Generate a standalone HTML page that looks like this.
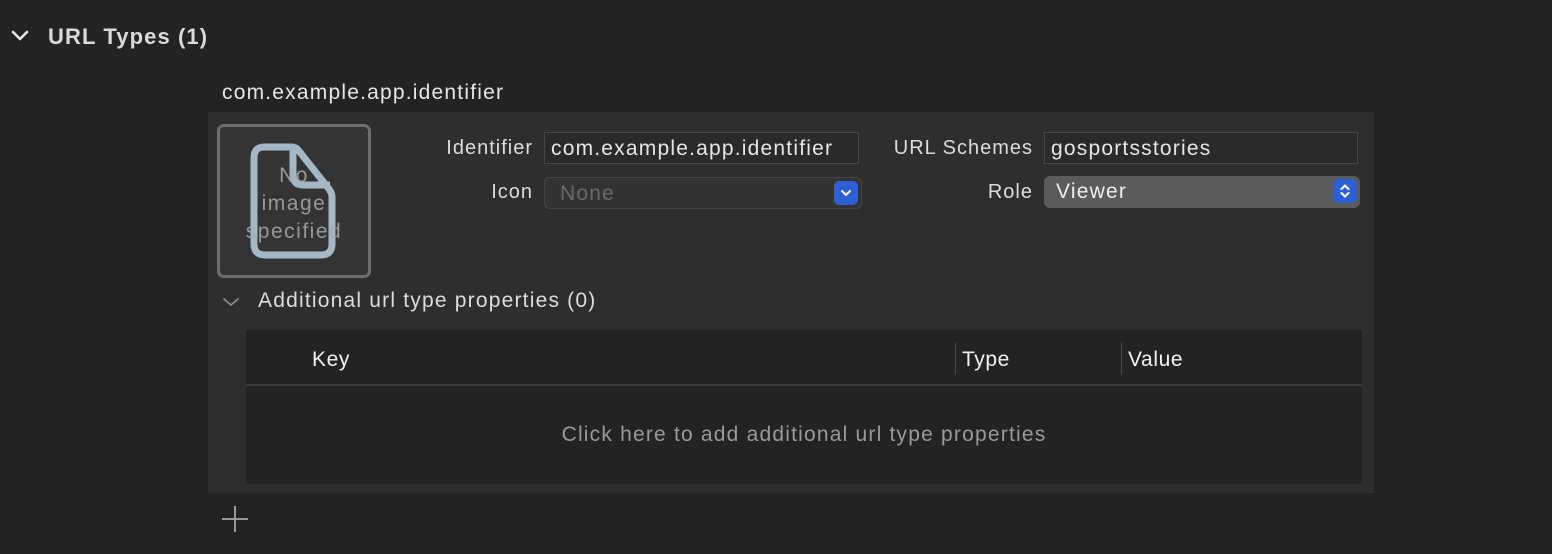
<!DOCTYPE html>
<html><head><meta charset="utf-8"><style>
*{margin:0;padding:0;box-sizing:border-box}
body{width:1552px;height:554px;background:#232323;font-family:"Liberation Sans",sans-serif;color:#e0e0e0;position:relative;overflow:hidden;letter-spacing:1.2px}
.a{position:absolute;white-space:nowrap}
.lbl{font-size:20px;color:#dcdcdc;text-align:right;letter-spacing:1px}
.field{position:absolute;background:#2a2a2a;border:1px solid #474747;font-size:21px;color:#e6e6e6;padding-left:6px;line-height:31px}
.pop{position:absolute;border-radius:6px;font-size:21px;padding-left:15px;line-height:31px}
.btn{position:absolute;top:3px;right:3px;width:24px;height:24px;border-radius:5px;background:#2f5fd4;}
</style></head><body>
<svg class="a" style="left:11px;top:30px" width="18" height="12"><path d="M2 2 L9 9 L16 2" fill="none" stroke="#e6e6e6" stroke-width="2.6" stroke-linecap="round" stroke-linejoin="round"/></svg>
<div class="a" style="left:48px;top:24px;font-size:22px;font-weight:bold;color:#dadada;letter-spacing:1.1px">URL Types (1)</div>
<div class="a" style="left:222px;top:81px;font-size:21px;color:#e6e6e6">com.example.app.identifier</div>

<div class="a" style="left:208px;top:112px;width:1166px;height:381px;background:#2e2e2e"></div>

<div class="a" style="left:217px;top:124px;width:154px;height:154px;border:3px solid #6e6e6e;border-radius:7px;background:#343434"></div>
<svg class="a" style="left:250px;top:143px" width="90" height="118"><path d="M14 4 H42 Q46 4 49 8 L79 46 Q82 50 82 54 V101 Q82 112 71 112 H15 Q4 112 4 101 V15 Q4 4 14 4 Z" fill="none" stroke="#a3b7c7" stroke-width="7"/><path d="M43 7 V32 Q43 42 53 42 H80" fill="none" stroke="#a3b7c7" stroke-width="7"/></svg>
<div class="a" style="left:217px;top:162px;width:154px;text-align:center;font-size:21px;line-height:28px;color:rgba(170,170,170,0.85);white-space:normal;letter-spacing:1.5px">No<br>image<br>specified</div>

<div class="a lbl" style="left:380px;width:153px;top:137px">Identifier</div>
<div class="field" style="left:544px;top:132px;width:315px;height:32px">com.example.app.identifier</div>
<div class="a lbl" style="left:380px;width:153px;top:181px">Icon</div>
<div class="pop" style="left:544px;top:177px;width:318px;height:32px;background:#333;border:1px solid #454545;color:#6a6a6a">None<div class="btn"><svg width="24" height="24"><path d="M8 10 L12 14 L16 10" fill="none" stroke="#fff" stroke-width="2" stroke-linecap="round"/></svg></div></div>

<div class="a lbl" style="left:860px;width:173px;top:137px">URL Schemes</div>
<div class="field" style="left:1044px;top:132px;width:314px;height:32px">gosportsstories</div>
<div class="a lbl" style="left:860px;width:173px;top:181px">Role</div>
<div class="pop" style="left:1044px;top:176px;width:316px;height:32px;background:#5b5b5b;color:#eee;padding-left:12px">Viewer<div class="btn"><svg width="24" height="24"><path d="M8.5 10 L12 6.5 L15.5 10 M8.5 14 L12 17.5 L15.5 14" fill="none" stroke="#fff" stroke-width="2" stroke-linecap="round"/></svg></div></div>

<svg class="a" style="left:222px;top:296px" width="18" height="12"><path d="M2 3 L9 9 L16 3" fill="none" stroke="#8a8a8a" stroke-width="1.8" stroke-linecap="round"/></svg>
<div class="a" style="left:258px;top:289px;font-size:21px;color:#dcdcdc">Additional url type properties (0)</div>

<div class="a" style="left:246px;top:330px;width:1116px;height:154px;background:#232323"></div>
<div class="a" style="left:246px;top:384px;width:1116px;height:2px;background:#3c3c3c"></div>
<div class="a" style="left:955px;top:343px;width:1px;height:32px;background:#4a4a4a"></div>
<div class="a" style="left:1121px;top:343px;width:1px;height:32px;background:#4a4a4a"></div>
<div class="a" style="left:312px;top:348px;font-size:21px;color:#f2f2f2;letter-spacing:0.6px">Key</div>
<div class="a" style="left:962px;top:348px;font-size:21px;color:#f2f2f2;letter-spacing:0.6px">Type</div>
<div class="a" style="left:1128px;top:348px;font-size:21px;color:#f2f2f2;letter-spacing:0.6px">Value</div>
<div class="a" style="left:246px;top:423px;width:1116px;text-align:center;font-size:21px;color:#9a9a9a">Click here to add additional url type properties</div>

<svg class="a" style="left:221px;top:505px" width="28" height="28"><path d="M14 1 V27 M1 14 H27" stroke="#9a9a9a" stroke-width="2"/></svg>
</body></html>
